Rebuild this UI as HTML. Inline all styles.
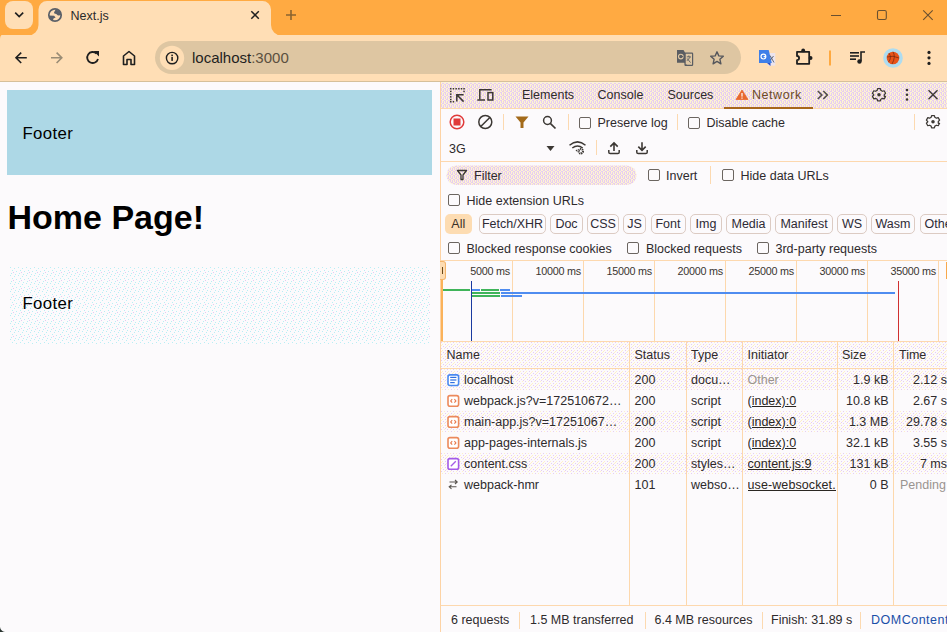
<!DOCTYPE html>
<html><head><meta charset="utf-8">
<style>
*{box-sizing:border-box;margin:0;padding:0}
html,body{width:947px;height:632px;overflow:hidden;background:#fcfafc;font-family:"Liberation Sans",sans-serif}
.a{position:absolute}
.t{position:absolute;white-space:pre;line-height:1}
svg{position:absolute;overflow:visible}
.dt{font-size:12.5px;color:#2e2a2c}
.cb{position:absolute;width:12px;height:12px;border:1.3px solid #6b6560;border-radius:2px}
.sep{position:absolute;width:1px;background:#fcd9b0}
.chip{position:absolute;top:214px;height:20px;border:1px solid #dccbc3;border-radius:5px;font-size:12.5px;color:#2e2a35;line-height:18px;text-align:center}
.vl{position:absolute;width:1px;background:#fdd8ad}
</style></head><body>

<!-- ===== Tab strip ===== -->
<div class="a" style="left:0;top:0;width:947px;height:35px;background:#ffaa42"></div>
<svg width="947" height="82" style="left:0;top:0">
  <path d="M0 35 H947 V82 H0 Z" fill="#ffdeb5"/><path d="M0 34 H5 Q0 34 0 39 Z" fill="#ffaa42"/>
  <path d="M28 35.5 A10.5 10.5 0 0 0 38.5 25 V9.5 A8.5 8.5 0 0 1 47 1 H262.5 A8.5 8.5 0 0 1 271 9.5 V25 A10.5 10.5 0 0 0 281.5 35.5 Z" fill="#ffdeb5"/>
  <rect x="5" y="1" width="28" height="28" rx="8" fill="#ffdeb5"/>
  <path d="M15.2 12.6 L19.2 16.6 L23.2 12.6" stroke="#1f1f1f" stroke-width="1.6" fill="none"/>
  <!-- globe -->
  <g transform="translate(55 15)">
  <circle r="6.2" fill="none" stroke="#5b6068" stroke-width="1.7"/>
  <path d="M-1 -2.6 L0.6 -5.5 Q4 -5 6 -2.5 L6 0.3 L3 0.6 L1.2 -0.9 L-0.6 -1.5 Z" fill="#5b6068"/>
  <path d="M-6 0.4 L-0.9 0.8 L0.6 2.6 L-1.5 3.4 L-2.2 6 Q-5 4.8 -6 3 Z" fill="#5b6068"/>
  </g>
  <!-- close X -->
  <path d="M251.3 11.2 L258.8 18.7 M258.8 11.2 L251.3 18.7" stroke="#1f1f1f" stroke-width="1.5"/>
  <!-- plus -->
  <path d="M286 15 H296 M291 10 V20" stroke="#8a6430" stroke-width="1.6"/>
  <!-- window controls -->
  <path d="M831 15.5 H841" stroke="#6a5030" stroke-width="1"/>
  <rect x="877.5" y="10.5" width="8.8" height="9" rx="1.5" stroke="#6a5030" stroke-width="1.1" fill="none"/>
  <path d="M923.2 10.3 L932.7 19.8 M932.7 10.3 L923.2 19.8" stroke="#6a5030" stroke-width="1.1"/>
  <!-- toolbar bottom line -->
  <rect x="0" y="81" width="947" height="1" fill="#d6c09a"/>
  <!-- nav icons -->
  <path d="M26.8 57.8 H16 M21.2 52.6 L16 57.8 L21.2 63" stroke="#1f1f1f" stroke-width="1.6" fill="none"/>
  <path d="M51 57.8 H61.8 M56.6 52.6 L61.8 57.8 L56.6 63" stroke="#9a8c75" stroke-width="1.6" fill="none"/>
  <path d="M98 59 A5.5 5.5 0 1 1 96.5 53.5" stroke="#1f1f1f" stroke-width="1.8" fill="none"/>
  <path d="M93.5 51 H99 V56.5 Z" fill="#1f1f1f"/>
  <path d="M123.5 64.5 V56 L129 51.5 L134.5 56 V64.5 H131 V59.5 H127 V64.5 Z" stroke="#1f1f1f" stroke-width="1.6" fill="none" stroke-linejoin="round"/>
  <!-- address bar -->
  <rect x="155" y="41" width="586" height="33" rx="16.5" fill="#dec6a2"/>
  <circle cx="172" cy="57.9" r="12.2" fill="#ffdeb5"/>
  <circle cx="172.1" cy="58.1" r="5.7" stroke="#1f1f1f" stroke-width="1.4" fill="none"/>
  <rect x="171.3" y="57" width="1.6" height="3.9" fill="#1f1f1f"/>
  <rect x="171.3" y="54.6" width="1.6" height="1.6" fill="#1f1f1f"/>
  <!-- translate icon -->
  <rect x="685" y="53.2" width="7.6" height="12.2" rx="0.6" fill="#dec6a2" stroke="#5a5d62" stroke-width="1.2"/>
  <path d="M677 50 H683.5 L685.3 53 V65.8 H687.8 L684.5 62.8 H677 Z" fill="#5a5d62"/>
  <circle cx="680.8" cy="56.6" r="2.3" stroke="#dec6a2" stroke-width="1.1" fill="none"/>
  <path d="M680.8 56.6 H683.2" stroke="#5a5d62" stroke-width="1"/>
  <path d="M686.8 56.8 H690.8 M688.8 55.5 V56.8 M687.2 58.5 L690.5 62.6 M690.3 57 L687 60.8" stroke="#5a5d62" stroke-width="0.9" fill="none"/>
  <!-- star -->
  <path d="M717 51.8 L718.8 55.9 L723.3 56.3 L719.9 59.3 L720.9 63.8 L717 61.4 L713.1 63.8 L714.1 59.3 L710.7 56.3 L715.2 55.9 Z" stroke="#55575c" stroke-width="1.4" fill="none" stroke-linejoin="round"/>
  <!-- google translate ext -->
  <rect x="767.8" y="53" width="7.5" height="12.6" fill="#ece4ee"/>
  <path d="M759 50 H768.7 L771.8 63 H759 Z" fill="#3f7fe8"/>
  <path d="M767 63 H770.5 V66 Z" fill="#2f4fc0"/>
  <circle cx="763.4" cy="56.6" r="2.4" stroke="#fff" stroke-width="1.2" fill="none"/>
  <path d="M763.6 56.6 H766" stroke="#fff" stroke-width="1.1"/>
  <path d="M770 55.5 L774 62.5 M773.5 56 L770.5 60" stroke="#556070" stroke-width="0.9"/>
  <!-- puzzle -->
  <path d="M797 51.8 H809.2 V63.8 H797 V60.2 A2.1 2.1 0 0 0 797 56 Z" stroke="#1f1f1f" stroke-width="1.8" fill="none" stroke-linejoin="round"/>
  <circle cx="803.2" cy="50.4" r="1.9" fill="#1f1f1f"/>
  <circle cx="810.6" cy="58" r="1.9" fill="#1f1f1f"/>
  <!-- divider -->
  <rect x="829" y="50.5" width="2" height="15" fill="#ffa940"/>
  <!-- media icon -->
  <rect x="850" y="52" width="9" height="1.6" fill="#1f1f1f"/>
  <rect x="850" y="55.2" width="9" height="1.6" fill="#1f1f1f"/>
  <rect x="850" y="58.4" width="6" height="1.6" fill="#1f1f1f"/>
  <path d="M861 61 V52 H865" stroke="#1f1f1f" stroke-width="1.6" fill="none"/>
  <circle cx="859.5" cy="61.5" r="2.2" fill="#1f1f1f"/>
  <!-- avatar -->
  <circle cx="893" cy="58" r="9.8" fill="#aedcf0"/>
  <circle cx="893" cy="58" r="6.3" fill="#e8541a"/>
  <path d="M887 57 Q893 55 899 58 M893 51.8 Q896 57 892 64 M889 53 Q892 58 888.5 62" stroke="#5a2010" stroke-width="0.6" fill="none"/>
  <!-- menu dots -->
  <circle cx="929" cy="52.4" r="1.6" fill="#1f1f1f"/>
  <circle cx="929" cy="57.8" r="1.6" fill="#1f1f1f"/>
  <circle cx="929" cy="63.4" r="1.6" fill="#1f1f1f"/>
</svg>
<div class="t" style="left:70.5px;top:10px;font-size:12.5px;color:#2a2a2a">Next.js</div>
<div class="t" style="left:192px;top:50px;font-size:15px;color:#1f1f1f">localhost<span style="color:#5b5040">:3000</span></div>

<!-- ===== Page content ===== -->
<div class="a" style="left:7px;top:90px;width:425px;height:85px;background:#add8e6"></div>
<div class="t" style="left:22.5px;top:125.5px;font-size:16.8px;letter-spacing:0.35px;color:#000">Footer</div>
<div class="t" style="left:7.5px;top:200px;font-size:34px;font-weight:bold;color:#000">Home Page!</div>
<svg width="420" height="77" style="left:10px;top:267px"><defs><pattern id="dth3" width="8" height="8" patternUnits="userSpaceOnUse"><rect width="8" height="8" fill="#fcfafc"/><rect x="0" y="0" width="1" height="1" fill="#b8eef4"/><rect x="4" y="1" width="1" height="1" fill="#b8eef4"/><rect x="2" y="3" width="1" height="1" fill="#b8eef4"/><rect x="6" y="4" width="1" height="1" fill="#b8eef4"/><rect x="1" y="6" width="1" height="1" fill="#b8eef4"/><rect x="5" y="7" width="1" height="1" fill="#b8eef4"/><rect x="3" y="5" width="1" height="1" fill="#e4caf0"/></pattern></defs><rect width="420" height="77" fill="url(#dth3)"/></svg>
<div class="t" style="left:22.5px;top:295.5px;font-size:16.8px;letter-spacing:0.35px;color:#000">Footer</div>


<!-- ===== DevTools ===== -->
<div class="a" style="left:440px;top:82px;width:507px;height:550px;background:#fcfafc"></div>
<div class="a" style="left:440px;top:82px;width:1px;height:550px;background:#fdd3a5"></div>

<!-- tab bar -->
<svg width="0" height="0" style="left:0;top:0"><defs>
<pattern id="dth" width="4" height="4" patternUnits="userSpaceOnUse"><rect width="4" height="4" fill="#fff4d2"/><rect x="0" y="0" width="1" height="1" fill="#e6cdf2"/><rect x="2" y="0" width="1" height="1" fill="#e6cdf2"/><rect x="1" y="1" width="2" height="1" fill="#e6cdf2"/><rect x="3" y="2" width="1" height="1" fill="#e6cdf2"/><rect x="0" y="2" width="1" height="2" fill="#e6cdf2"/><rect x="2" y="3" width="1" height="1" fill="#e6cdf2"/></pattern>
<pattern id="dth2" width="6" height="6" patternUnits="userSpaceOnUse"><rect width="6" height="6" fill="#fcfafc"/><rect x="0" y="0" width="1" height="1" fill="#e6cdf2"/><rect x="3" y="0" width="1" height="1" fill="#fff0c8"/><rect x="1" y="2" width="1" height="1" fill="#fff0c8"/><rect x="4" y="2" width="1" height="1" fill="#e6cdf2"/><rect x="2" y="4" width="1" height="1" fill="#e6cdf2"/><rect x="5" y="4" width="1" height="1" fill="#fff0c8"/><rect x="4" y="5" width="1" height="1" fill="#e6cdf2"/><rect x="0" y="3" width="1" height="1" fill="#fff0c8"/></pattern>
</defs></svg>
<svg width="506" height="26" style="left:441px;top:82px"><rect width="506" height="26" fill="url(#dth)"/></svg><div class="a" style="left:441px;top:82px;width:506px;height:1px;background:#fbf0dc"></div>
<div class="a" style="left:441px;top:108px;width:506px;height:1px;background:#fdd8ae"></div>
<div class="a" style="left:724px;top:107px;width:89px;height:2px;background:#a8661c"></div>
<div class="t dt" style="left:522px;top:89px">Elements</div>
<div class="t dt" style="left:597.5px;top:89px">Console</div>
<div class="t dt" style="left:667.5px;top:89px">Sources</div>
<div class="t dt" style="left:752px;top:89px;color:#6a4a28;letter-spacing:0.55px">Network</div>
<!-- toolbar row 1 -->
<div class="t dt" style="left:597.5px;top:116.8px">Preserve log</div>
<div class="t dt" style="left:706.5px;top:116.8px">Disable cache</div>
<div class="cb" style="left:579px;top:116.5px"></div>
<div class="cb" style="left:688px;top:116.5px"></div>
<div class="sep" style="left:503px;top:114px;height:16px"></div>
<div class="sep" style="left:568px;top:114px;height:16px"></div>
<div class="sep" style="left:677px;top:114px;height:16px"></div>
<div class="sep" style="left:914px;top:114px;height:16px"></div>
<div class="sep" style="left:503px;top:88px;height:14px;opacity:.35"></div>
<div class="sep" style="left:860.5px;top:88px;height:14px;opacity:.35"></div>
<!-- toolbar row 2 -->
<div class="t dt" style="left:449px;top:142.5px">3G</div>
<div class="sep" style="left:595.5px;top:140px;height:15px"></div>
<div class="a" style="left:441px;top:161px;width:506px;height:1px;background:#fdd8ae"></div>
<!-- filter row -->
<svg width="191" height="20" style="left:446px;top:165px"><rect x="0.5" y="0.5" width="190" height="19.5" rx="9.75" fill="url(#dth)"/></svg>
<div class="t dt" style="left:474px;top:169.5px">Filter</div>
<div class="cb" style="left:648px;top:169px"></div>
<div class="t dt" style="left:666px;top:169.5px">Invert</div>
<div class="sep" style="left:710px;top:166px;height:18px"></div>
<div class="cb" style="left:722px;top:169px"></div>
<div class="t dt" style="left:740.5px;top:169.5px">Hide data URLs</div>
<div class="cb" style="left:448px;top:194px"></div>
<div class="t dt" style="left:466.5px;top:194.8px">Hide extension URLs</div>
<!-- chips -->
<div class="chip" style="left:445px;width:26.5px;border:none;background:#fddcb2;color:#3a3028;line-height:20px">All</div>
<div class="chip" style="left:479px;width:67px">Fetch/XHR</div>
<div class="chip" style="left:550px;width:33px">Doc</div>
<div class="chip" style="left:587px;width:32px">CSS</div>
<div class="chip" style="left:623px;width:23px">JS</div>
<div class="chip" style="left:650.5px;width:35px">Font</div>
<div class="chip" style="left:690px;width:32px">Img</div>
<div class="chip" style="left:726px;width:45px">Media</div>
<div class="chip" style="left:775px;width:58px">Manifest</div>
<div class="chip" style="left:837px;width:30px">WS</div>
<div class="chip" style="left:871px;width:44px">Wasm</div>
<div class="chip" style="left:919.5px;width:45px;text-align:left;padding-left:4px">Other</div>
<!-- blocked row -->
<div class="cb" style="left:448px;top:242px"></div>
<div class="t dt" style="left:466.5px;top:242.5px">Blocked response cookies</div>
<div class="cb" style="left:627px;top:242px"></div>
<div class="t dt" style="left:646px;top:242.5px">Blocked requests</div>
<div class="cb" style="left:757px;top:242px"></div>
<div class="t dt" style="left:775.5px;top:242.5px">3rd-party requests</div>
<!-- timeline -->
<div class="a" style="left:441px;top:260px;width:506px;height:1px;background:#fdd8ae"></div>
<div class="vl" style="left:512px;top:261px;height:80px"></div>
<div class="vl" style="left:583px;top:261px;height:80px"></div>
<div class="vl" style="left:654px;top:261px;height:80px"></div>
<div class="vl" style="left:725px;top:261px;height:80px"></div>
<div class="vl" style="left:796px;top:261px;height:80px"></div>
<div class="vl" style="left:867px;top:261px;height:80px"></div>
<div class="vl" style="left:938px;top:261px;height:80px"></div>
<div class="t" style="right:437px;top:266px;font-size:10.8px;letter-spacing:-0.25px;color:#3a3530">5000 ms</div>
<div class="t" style="right:366px;top:266px;font-size:10.8px;letter-spacing:-0.25px;color:#3a3530">10000 ms</div>
<div class="t" style="right:295px;top:266px;font-size:10.8px;letter-spacing:-0.25px;color:#3a3530">15000 ms</div>
<div class="t" style="right:224px;top:266px;font-size:10.8px;letter-spacing:-0.25px;color:#3a3530">20000 ms</div>
<div class="t" style="right:153px;top:266px;font-size:10.8px;letter-spacing:-0.25px;color:#3a3530">25000 ms</div>
<div class="t" style="right:82px;top:266px;font-size:10.8px;letter-spacing:-0.25px;color:#3a3530">30000 ms</div>
<div class="t" style="right:11px;top:266px;font-size:10.8px;letter-spacing:-0.25px;color:#3a3530">35000 ms</div>
<div class="a" style="left:441px;top:280px;width:2px;height:61px;background:#fbb25a"></div>
<div class="a" style="left:440px;top:261px;width:6px;height:19px;background:#fddcb2;border-radius:0 3px 3px 0;border:1px solid #f5b56a;border-left:none"></div>
<div class="a" style="left:442px;top:267px;width:1px;height:7px;background:#6a4818"></div>
<div class="a" style="left:946px;top:262px;width:1px;height:17px;background:#f8a84c"></div>
<div class="a" style="left:443px;top:289px;width:27px;height:2.3px;background:#3fb45a"></div>
<div class="a" style="left:472px;top:289px;width:8px;height:2.3px;background:#4f8cf0"></div>
<div class="a" style="left:481px;top:289px;width:18.3px;height:2.3px;background:#3fb45a"></div>
<div class="a" style="left:500.3px;top:289px;width:9.6px;height:2.3px;background:#4f8cf0"></div>
<div class="a" style="left:472px;top:292px;width:28px;height:2.3px;background:#3fb45a"></div>
<div class="a" style="left:501px;top:292px;width:394px;height:2.3px;background:#4f8cf0"></div>
<div class="a" style="left:472px;top:295px;width:28px;height:2.3px;background:#3fb45a"></div>
<div class="a" style="left:501px;top:295px;width:21px;height:2.3px;background:#4f8cf0"></div>
<div class="a" style="left:471px;top:281px;width:1.3px;height:60px;background:#1a3aa0"></div>
<div class="a" style="left:898px;top:281px;width:1.3px;height:60px;background:#d03030"></div>
<!-- table header -->
<div class="a" style="left:441px;top:341px;width:506px;height:1px;background:#fdd8ae"></div>
<svg width="506" height="26" style="left:441px;top:342px"><rect width="506" height="26" fill="url(#dth2)"/></svg>
<div class="a" style="left:441px;top:368px;width:506px;height:1px;background:#fdd8ae"></div>
<div class="t dt" style="left:446.5px;top:349px">Name</div>
<div class="t dt" style="left:634.5px;top:349px">Status</div>
<div class="t dt" style="left:691px;top:349px">Type</div>
<div class="t dt" style="left:747.5px;top:349px">Initiator</div>
<div class="t dt" style="left:842px;top:349px">Size</div>
<div class="t dt" style="left:899px;top:349px">Time</div>
<!-- rows bg -->
<svg width="506" height="21" style="left:441px;top:369px"><rect width="506" height="21" fill="url(#dth2)"/></svg>
<svg width="506" height="21" style="left:441px;top:411px"><rect width="506" height="21" fill="url(#dth2)"/></svg>
<svg width="506" height="21" style="left:441px;top:453px"><rect width="506" height="21" fill="url(#dth2)"/></svg>
<!-- column lines -->
<div class="vl" style="left:629px;top:342px;height:263px"></div>
<div class="vl" style="left:686px;top:342px;height:263px"></div>
<div class="vl" style="left:742px;top:342px;height:263px"></div>
<div class="vl" style="left:837px;top:342px;height:263px"></div>
<div class="vl" style="left:893px;top:342px;height:263px"></div>
<!-- status bar -->
<div class="a" style="left:441px;top:605px;width:506px;height:1px;background:#fdd8ae"></div>
<div class="t dt" style="left:451px;top:613.8px">6 requests</div>
<div class="sep" style="left:519px;top:612px;height:17px"></div>
<div class="t dt" style="left:530px;top:613.8px">1.5 MB transferred</div>
<div class="sep" style="left:645px;top:612px;height:17px"></div>
<div class="t dt" style="left:654.5px;top:613.8px">6.4 MB resources</div>
<div class="sep" style="left:762px;top:612px;height:17px"></div>
<div class="t dt" style="left:771px;top:613.8px">Finish: 31.89 s</div>
<div class="sep" style="left:860px;top:612px;height:17px"></div>
<div class="t dt" style="left:871px;top:613.8px;color:#1a4fa8;letter-spacing:0.5px">DOMContentLoaded</div>
<div class="t dt" style="left:464px;top:374px">localhost</div>
<div class="t dt" style="left:634.5px;top:374px">200</div>
<div class="t dt" style="left:691px;top:374px">docu…</div>
<div class="t dt" style="left:747.5px;top:374px;color:#9a9490">Other</div>
<div class="t dt" style="right:58.5px;top:374px">1.9 kB</div>
<div class="t dt" style="left:907px;top:374px;width:0"></div><div class="t dt" style="right:0px;top:374px">2.12 s</div>
<div class="t dt" style="left:464px;top:395px">webpack.js?v=172510672…</div>
<div class="t dt" style="left:634.5px;top:395px">200</div>
<div class="t dt" style="left:691px;top:395px">script</div>
<div class="a" style="left:747.5px;top:395px;width:88px;overflow:hidden"><div class="t dt" style="position:static;text-decoration:underline;color:#2a2622">(index):0</div></div>
<div class="t dt" style="right:58.5px;top:395px">10.8 kB</div>
<div class="t dt" style="left:907px;top:395px;width:0"></div><div class="t dt" style="right:0px;top:395px">2.67 s</div>
<div class="t dt" style="left:464px;top:416px">main-app.js?v=17251067…</div>
<div class="t dt" style="left:634.5px;top:416px">200</div>
<div class="t dt" style="left:691px;top:416px">script</div>
<div class="a" style="left:747.5px;top:416px;width:88px;overflow:hidden"><div class="t dt" style="position:static;text-decoration:underline;color:#2a2622">(index):0</div></div>
<div class="t dt" style="right:58.5px;top:416px">1.3 MB</div>
<div class="t dt" style="left:907px;top:416px;width:0"></div><div class="t dt" style="right:0px;top:416px">29.78 s</div>
<div class="t dt" style="left:464px;top:437px">app-pages-internals.js</div>
<div class="t dt" style="left:634.5px;top:437px">200</div>
<div class="t dt" style="left:691px;top:437px">script</div>
<div class="a" style="left:747.5px;top:437px;width:88px;overflow:hidden"><div class="t dt" style="position:static;text-decoration:underline;color:#2a2622">(index):0</div></div>
<div class="t dt" style="right:58.5px;top:437px">32.1 kB</div>
<div class="t dt" style="left:907px;top:437px;width:0"></div><div class="t dt" style="right:0px;top:437px">3.55 s</div>
<div class="t dt" style="left:464px;top:458px">content.css</div>
<div class="t dt" style="left:634.5px;top:458px">200</div>
<div class="t dt" style="left:691px;top:458px">styles…</div>
<div class="a" style="left:747.5px;top:458px;width:88px;overflow:hidden"><div class="t dt" style="position:static;text-decoration:underline;color:#2a2622">content.js:9</div></div>
<div class="t dt" style="right:58.5px;top:458px">131 kB</div>
<div class="t dt" style="left:907px;top:458px;width:0"></div><div class="t dt" style="right:0px;top:458px">7 ms</div>
<div class="t dt" style="left:464px;top:479px">webpack-hmr</div>
<div class="t dt" style="left:634.5px;top:479px">101</div>
<div class="t dt" style="left:691px;top:479px">webso…</div>
<div class="a" style="left:747.5px;top:479px;width:88px;overflow:hidden"><div class="t dt" style="position:static;text-decoration:underline;color:#2a2622;letter-spacing:0.1px">use-websocket.&#8202;</div></div>
<div class="t dt" style="right:58.5px;top:479px">0 B</div>
<div class="t dt" style="left:900px;top:479px;color:#9a9490">Pending</div>

<!-- ===== DevTools icons ===== -->
<svg width="947" height="632" style="left:0;top:0">
  <!-- inspect -->
  <rect x="450" y="88" width="1.5" height="1.5" fill="#3c3834"/><rect x="452.7" y="88" width="1.5" height="1.5" fill="#3c3834"/><rect x="455.4" y="88" width="1.5" height="1.5" fill="#3c3834"/><rect x="458.1" y="88" width="1.5" height="1.5" fill="#3c3834"/><rect x="460.8" y="88" width="1.5" height="1.5" fill="#3c3834"/><rect x="463.3" y="88" width="1.5" height="1.5" fill="#3c3834"/><rect x="450" y="90.7" width="1.5" height="1.5" fill="#3c3834"/><rect x="450" y="93.4" width="1.5" height="1.5" fill="#3c3834"/><rect x="450" y="96.1" width="1.5" height="1.5" fill="#3c3834"/><rect x="450" y="98.8" width="1.5" height="1.5" fill="#3c3834"/><rect x="450" y="101" width="1.5" height="1.5" fill="#3c3834"/><rect x="452.7" y="101" width="1.5" height="1.5" fill="#3c3834"/><rect x="463.3" y="90.7" width="1.5" height="1.5" fill="#3c3834"/>
  <path d="M456.8 101.5 V94.8 H463.6 M456.8 94.8 L463.6 101.6" stroke="#3c3834" stroke-width="1.5" fill="none"/>
  <!-- device -->
  <path d="M479.8 99.5 V89.7 H491.6" stroke="#3c3834" stroke-width="1.5" fill="none"/>
  <path d="M477.3 100 H485" stroke="#3c3834" stroke-width="1.5" fill="none"/>
  <rect x="488" y="92.6" width="4.8" height="7.4" stroke="#3c3834" stroke-width="1.5" fill="none"/>
  <!-- warning triangle -->
  <path d="M742 90 L748 99.5 H736 Z" fill="#e8692e" stroke="#e8692e" stroke-width="0.8" stroke-linejoin="round"/>
  <rect x="741.4" y="93" width="1.2" height="3.6" fill="#fff"/>
  <rect x="741.4" y="97.5" width="1.2" height="1.2" fill="#fff"/>
  <!-- >> -->
  <path d="M817.8 91 L821.8 95 L817.8 99 M823.3 91 L827.3 95 L823.3 99" stroke="#55504c" stroke-width="1.7" fill="none"/>
  <!-- gear tab bar -->
  <g transform="translate(879 94.8) scale(0.88)">
    <path id="gearp" d="M-1.6 -7 H1.6 L2.1 -5 L3.9 -4 L5.9 -4.6 L7.5 -1.8 L6 -0.2 V0.2 L6 1.8 L7.5 1.8 L5.9 4.6 L3.9 4 L2.1 5 L1.6 7 H-1.6 L-2.1 5 L-3.9 4 L-5.9 4.6 L-7.5 1.8 L-6 0.2 V-0.2 L-7.5 -1.8 L-5.9 -4.6 L-3.9 -4 L-2.1 -5 Z" stroke="#3c3834" stroke-width="1.4" fill="none" stroke-linejoin="round"/>
    <circle r="2" fill="#3c3834"/>
  </g>
  <!-- dots -->
  <circle cx="907" cy="90" r="1.3" fill="#3c3834"/>
  <circle cx="907" cy="94.8" r="1.3" fill="#3c3834"/>
  <circle cx="907" cy="99.5" r="1.3" fill="#3c3834"/>
  <!-- close -->
  <path d="M928.5 90.3 L937.5 99.3 M937.5 90.3 L928.5 99.3" stroke="#3c3834" stroke-width="1.4"/>
  <!-- record -->
  <circle cx="457" cy="122" r="6.8" stroke="#e03a3a" stroke-width="1.5" fill="none"/>
  <rect x="453.5" y="118.5" width="7" height="7" fill="#e03a3a"/>
  <!-- clear -->
  <circle cx="485.3" cy="122" r="6.5" stroke="#3c3834" stroke-width="1.5" fill="none"/>
  <path d="M481 126.3 L489.6 117.7" stroke="#3c3834" stroke-width="1.5"/>
  <!-- funnel -->
  <path d="M515.5 116.5 H528.5 L523.5 122.5 V128 H520.5 V122.5 Z" fill="#a36a1a"/>
  <!-- search -->
  <circle cx="547.5" cy="120.5" r="3.9" stroke="#3c3834" stroke-width="1.5" fill="none"/>
  <path d="M550.3 123.3 L555.5 128.5" stroke="#3c3834" stroke-width="1.7"/>
  <!-- gear row1 -->
  <g transform="translate(933 121.7) scale(0.88)">
    <use href="#gearp"/>
    <circle r="2" fill="#3c3834"/>
  </g>
  <!-- dropdown triangle -->
  <path d="M546.5 146 H554.5 L550.5 151 Z" fill="#3c3834"/>
  <!-- wifi gear -->
  <path d="M569.5 145.2 Q577.5 138.5 585.5 145.2 M572.3 148 Q577.5 143.8 582.7 148" stroke="#3c3834" stroke-width="1.5" fill="none"/>
  <path d="M575.5 150.5 L577.3 149.3 L577.3 151.7 Z" fill="#3c3834"/>
  <circle cx="580.8" cy="151.3" r="2.1" fill="none" stroke="#3c3834" stroke-width="2.2" stroke-dasharray="1.1 0.55"/>
  <circle cx="580.8" cy="151.3" r="1" fill="#fcfafc"/>
  <!-- upload -->
  <path d="M614 151 V143 M610.3 146.6 L614 142.9 L617.7 146.6" stroke="#3c3834" stroke-width="1.6" fill="none"/>
  <path d="M608.8 150 V152.2 Q608.8 153.6 610.2 153.6 H617.8 Q619.2 153.6 619.2 152.2 V150" stroke="#3c3834" stroke-width="1.5" fill="none"/>
  <!-- download -->
  <path d="M642 142.3 V150.2 M638.3 146.6 L642 150.3 L645.7 146.6" stroke="#3c3834" stroke-width="1.6" fill="none"/>
  <path d="M636.8 150 V152.2 Q636.8 153.6 638.2 153.6 H645.8 Q647.2 153.6 647.2 152.2 V150" stroke="#3c3834" stroke-width="1.5" fill="none"/>
  <!-- filter small icon -->
  <path d="M457.5 170.5 H466.5 L463 175 V179.5 H461 V175 Z" stroke="#3c3834" stroke-width="1.3" fill="none" stroke-linejoin="round"/>
  <!-- row icons -->
  <rect x="448" y="374.9" width="10.6" height="10.6" rx="2" fill="#fff" stroke="#4a8af0" stroke-width="1.6"/>
  <rect x="450.2" y="376.8" width="6.2" height="1.2" fill="#2f6fe0"/>
  <rect x="450.2" y="379.4" width="6.2" height="1.2" fill="#2f6fe0"/>
  <rect x="450.2" y="382" width="4.5" height="1.2" fill="#2f6fe0"/>
  <g id="jsi">
    <rect x="448" y="395.6" width="10.6" height="10.6" rx="2" stroke="#ec8a5c" stroke-width="1.6" fill="#fff"/>
    <path d="M452.2 399.2 L450.7 400.9 L452.2 402.6 M454.4 399.2 L455.9 400.9 L454.4 402.6" stroke="#e8784a" stroke-width="1.1" fill="none"/>
  </g>
  <use href="#jsi" y="21"/>
  <use href="#jsi" y="42"/>
  <rect x="448" y="458.6" width="10.6" height="10.6" rx="1.8" stroke="#a45be8" stroke-width="1.6" fill="#fff"/>
  <path d="M450.8 466.3 L455.8 461.3" stroke="#a45be8" stroke-width="1.3"/>
  <path d="M449.5 482 H457 M455 480 L457.2 482 L455 484 M449 486.8 H456.5 M451.5 484.8 L449.2 486.8 L451.5 488.8" stroke="#5a5550" stroke-width="1.1" fill="none"/>
</svg>
<svg width="8" height="8" style="left:0;top:624px"><path d="M0 3 Q0.6 7.2 5 8 H0 Z" fill="#2a3530"/></svg>
</body></html>
